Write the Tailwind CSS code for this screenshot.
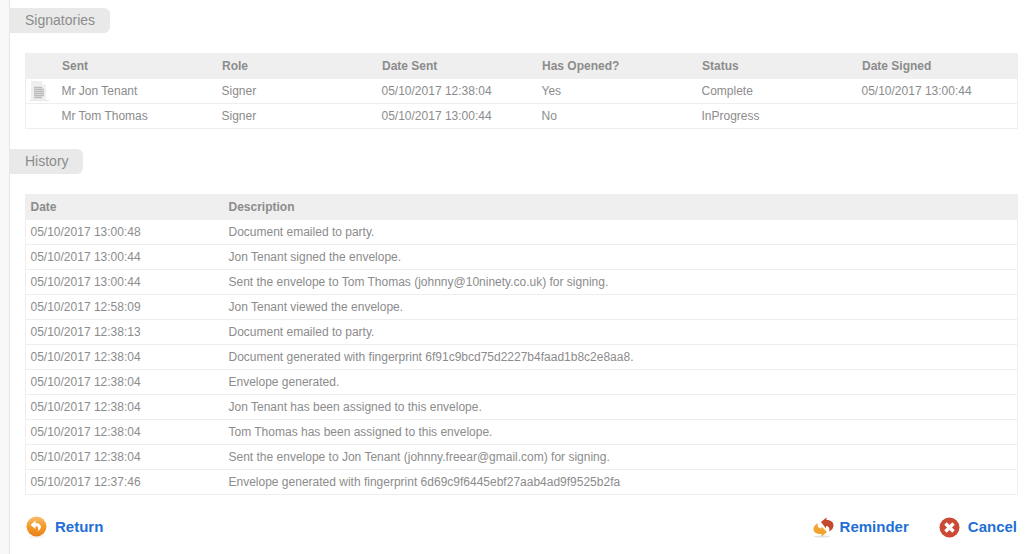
<!DOCTYPE html>
<html lang="en">
<head>
  <meta charset="UTF-8" />
  <title>Envelope details</title>
  <script src="https://cdn.jsdelivr.net/npm/@tailwindcss/browser@4"></script>
</head>
<body class="bg-white font-['Liberation_Sans',Arial,sans-serif] text-xs text-[#8c8c8c] overflow-hidden">
  <div class="flex h-[554px]">
    <!-- Left strip -->
    <div class="w-[10px] shrink-0 bg-[#f8f8f8] border-r border-[#e6e6e6]"></div>

    <div class="flex-1 pr-[13px]">
      <!-- Signatories -->
      <div class="pt-2">
        <h2 class="w-[100px] h-[25px] pl-[15px] leading-[24px] text-sm font-normal bg-[#e9e9e9] rounded-r-md text-[#8c8c8c]">Signatories</h2>
      </div>
      <div class="mt-5 ml-[15px] border-x border-b border-[#eeeeee]">
        <div class="grid grid-cols-[36px_160px_160px_160px_160px_160px_1fr] h-[26px] pb-[1px] items-center bg-[#efefef] font-bold">
          <span></span><span>Sent</span><span>Role</span><span>Date Sent</span><span>Has Opened?</span><span>Status</span><span>Date Signed</span>
        </div>
        <div class="grid grid-cols-[35.5px_160px_160px_160px_160px_160px_1fr] h-[25px] items-center border-b border-[#eeeeee]">
          <span class="pl-[3px]">
            <svg width="20" height="22" viewBox="0 0 20 22">
              <path d="M2 1h11l4 4v15H2z" fill="#efefef" />
              <path d="M13 1v4h4z" fill="#fbfbfb" />
              <path d="M5 7.500h8M5 9.500h10M5 11.500h10M5 13.500h10M5 15.500h10M5 17.500h8" stroke="#bcbcbc" stroke-width="1.500" />
              <path d="M0 20.500h20" stroke="#e8e8e8" />
            </svg>
          </span>
          <span>Mr Jon Tenant</span><span>Signer</span><span>05/10/2017 12:38:04</span><span>Yes</span><span>Complete</span><span>05/10/2017 13:00:44</span>
        </div>
        <div class="grid grid-cols-[35.5px_160px_160px_160px_160px_160px_1fr] h-[24px] items-center">
          <span></span><span>Mr Tom Thomas</span><span>Signer</span><span>05/10/2017 13:00:44</span><span>No</span><span>InProgress</span><span></span>
        </div>
      </div>

      <!-- History -->
      <div class="mt-5">
        <h2 class="w-[73px] h-[25px] pl-[15px] leading-[24px] text-sm font-normal bg-[#e9e9e9] rounded-r-md text-[#8c8c8c]">History</h2>
      </div>
      <div class="mt-5 ml-[15px] border-x border-b border-[#eeeeee]">
        <div class="grid grid-cols-[198px_1fr] pl-[4.5px] h-[26px] items-center bg-[#efefef] font-bold">
          <span>Date</span><span>Description</span>
        </div>
        <div class="grid grid-cols-[198px_1fr] pl-[4.5px] h-[25px] items-center border-b border-[#eeeeee]"><span>05/10/2017 13:00:48</span><span>Document emailed to party.</span></div>
        <div class="grid grid-cols-[198px_1fr] pl-[4.5px] h-[25px] items-center border-b border-[#eeeeee]"><span>05/10/2017 13:00:44</span><span>Jon Tenant signed the envelope.</span></div>
        <div class="grid grid-cols-[198px_1fr] pl-[4.5px] h-[25px] items-center border-b border-[#eeeeee]"><span>05/10/2017 13:00:44</span><span>Sent the envelope to Tom Thomas (johnny@10ninety.co.uk) for signing.</span></div>
        <div class="grid grid-cols-[198px_1fr] pl-[4.5px] h-[25px] items-center border-b border-[#eeeeee]"><span>05/10/2017 12:58:09</span><span>Jon Tenant viewed the envelope.</span></div>
        <div class="grid grid-cols-[198px_1fr] pl-[4.5px] h-[25px] items-center border-b border-[#eeeeee]"><span>05/10/2017 12:38:13</span><span>Document emailed to party.</span></div>
        <div class="grid grid-cols-[198px_1fr] pl-[4.5px] h-[25px] items-center border-b border-[#eeeeee]"><span>05/10/2017 12:38:04</span><span>Document generated with fingerprint 6f91c9bcd75d2227b4faad1b8c2e8aa8.</span></div>
        <div class="grid grid-cols-[198px_1fr] pl-[4.5px] h-[25px] items-center border-b border-[#eeeeee]"><span>05/10/2017 12:38:04</span><span>Envelope generated.</span></div>
        <div class="grid grid-cols-[198px_1fr] pl-[4.5px] h-[25px] items-center border-b border-[#eeeeee]"><span>05/10/2017 12:38:04</span><span>Jon Tenant has been assigned to this envelope.</span></div>
        <div class="grid grid-cols-[198px_1fr] pl-[4.5px] h-[25px] items-center border-b border-[#eeeeee]"><span>05/10/2017 12:38:04</span><span>Tom Thomas has been assigned to this envelope.</span></div>
        <div class="grid grid-cols-[198px_1fr] pl-[4.5px] h-[25px] items-center border-b border-[#eeeeee]"><span>05/10/2017 12:38:04</span><span>Sent the envelope to Jon Tenant (johnny.freear@gmail.com) for signing.</span></div>
        <div class="grid grid-cols-[198px_1fr] pl-[4.5px] h-[24px] items-center"><span>05/10/2017 12:37:46</span><span>Envelope generated with fingerprint 6d69c9f6445ebf27aab4ad9f9525b2fa</span></div>
      </div>

      <!-- Actions -->
      <div class="mt-[21px] ml-[16px] mr-[1px] flex items-center text-[15px] font-bold text-[#1f6fd6]">
        <a href="#" class="flex items-center gap-[8px]">
          <svg width="21" height="22" viewBox="0 0 21 22">
            <defs>
              <linearGradient id="ret" x1="0" y1="0" x2="0" y2="1">
                <stop offset="0" stop-color="#f8bd6d" />
                <stop offset="0.5" stop-color="#f39a2b" />
                <stop offset="1" stop-color="#e9801a" />
              </linearGradient>
            </defs>
            <path d="M3 21h15" stroke="#e8e8e8" />
            <circle cx="10.500" cy="10.500" r="10" fill="url(#ret)" />
            <path d="M9.500 4.500L4.500 9l5 4v-2.700c2.500-.3 3.500 1.300 2.300 4.700 3-1.500 3.700-3.700 2.800-5.500-.8-1.700-2.800-2.500-5.100-2.500z" fill="#fff" />
          </svg>
          Return
        </a>
        <a href="#" class="ml-auto flex items-center gap-[6px]">
          <svg width="21" height="21" viewBox="0 0 21 21">
            <ellipse cx="9" cy="19.500" rx="8" ry="1" fill="#e2e2e2" />
            <path d="M8 5l5.500-4.500V3c4-.3 7 2 7 5.500 0 2.500-1.500 4.500-4.500 6 1-2.500.5-5-3-5.500v2.500z" fill="#c4492c" />
            <path d="M14 15l-5.500 4.500V17C4 17.300.5 15.500.5 12c0-2.500 1.700-4.500 4.500-6-1 2.500-.5 5 3.500 5.500V9.500z" fill="#f2a22f" />
          </svg>
          Reminder
        </a>
        <a href="#" class="ml-[30px] flex items-center gap-[8px]">
          <svg width="21" height="21" viewBox="0 0 21 21">
            <circle cx="10.500" cy="10.500" r="10" fill="#cb4a33" />
            <path d="M6.500 6.500l8 8M14.500 6.500l-8 8" stroke="#fff" stroke-width="3.500" />
          </svg>
          Cancel
        </a>
      </div>
    </div>
  </div>
</body>
</html>
